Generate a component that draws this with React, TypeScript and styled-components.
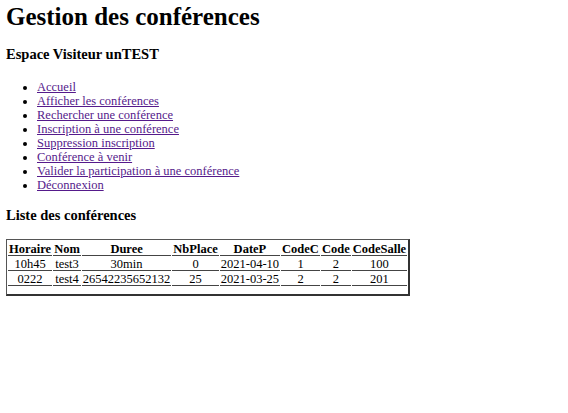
import type { FC } from "react";
import styled, { createGlobalStyle } from "styled-components";

const GlobalStyle = createGlobalStyle`
  html, body {
    margin: 0;
    padding: 0;
    background: #ffffff;
  }
  body {
    font-family: "Liberation Serif", "Times New Roman", serif;
    font-size: 12.5px;
    color: #000000;
  }
`;

const Page = styled.main`
  padding: 2px 6px;
`;

const Title = styled.h1`
  font-size: 25px;
  line-height: 29px;
  font-weight: bold;
  margin: 0 0 15px;
`;

const Subtitle = styled.h3`
  font-size: 14.5px;
  line-height: 17px;
  font-weight: bold;
  margin: 0;
`;

const Menu = styled.ul`
  list-style: disc;
  margin: 17px 0 15px;
  padding-left: 31px;
`;

const MenuItem = styled.li`
  line-height: 14px;
`;

const MenuLink = styled.a`
  color: #551a8b;
  text-decoration: underline;
`;

const Table = styled.table`
  border-style: solid;
  border-color: #555555 #333333 #333333 #555555;
  border-width: 1px 2px 2px 1px;
  border-spacing: 1px 2px;
  padding: 1px 0 6px;
  margin-top: 15px;
  font-size: 12.5px;
`;

const Th = styled.th`
  border-bottom: 1px solid #444444;
  padding: 0 1px;
  line-height: 12px;
  font-weight: bold;
  text-align: center;
`;

const Td = styled.td`
  border-bottom: 1px solid #444444;
  padding: 0 1px;
  line-height: 12px;
  text-align: center;
`;

const links = [
  "Accueil",
  "Afficher les conférences",
  "Rechercher une conférence",
  "Inscription à une conférence",
  "Suppression inscription",
  "Conférence à venir",
  "Valider la participation à une conférence",
  "Déconnexion",
];

const headers = ["Horaire", "Nom", "Duree", "NbPlace", "DateP", "CodeC", "Code", "CodeSalle"];

const rows = [
  ["10h45", "test3", "30min", "0", "2021-04-10", "1", "2", "100"],
  ["0222", "test4", "26542235652132", "25", "2021-03-25", "2", "2", "201"],
];

const App: FC = () => {
  return (
    <Page>
      <GlobalStyle />
      <Title>Gestion des conférences</Title>
      <Subtitle>Espace Visiteur unTEST</Subtitle>

      <Menu>
        {links.map((label) => (
          <MenuItem key={label}>
            <MenuLink href="#">{label}</MenuLink>
          </MenuItem>
        ))}
      </Menu>

      <Subtitle>Liste des conférences</Subtitle>

      <Table>
        <thead>
          <tr>
            {headers.map((h) => (
              <Th key={h}>{h}</Th>
            ))}
          </tr>
        </thead>
        <tbody>
          {rows.map((row) => (
            <tr key={row[0]}>
              {row.map((cell, i) => (
                <Td key={i}>{cell}</Td>
              ))}
            </tr>
          ))}
        </tbody>
      </Table>
    </Page>
  );
};

export default App;
